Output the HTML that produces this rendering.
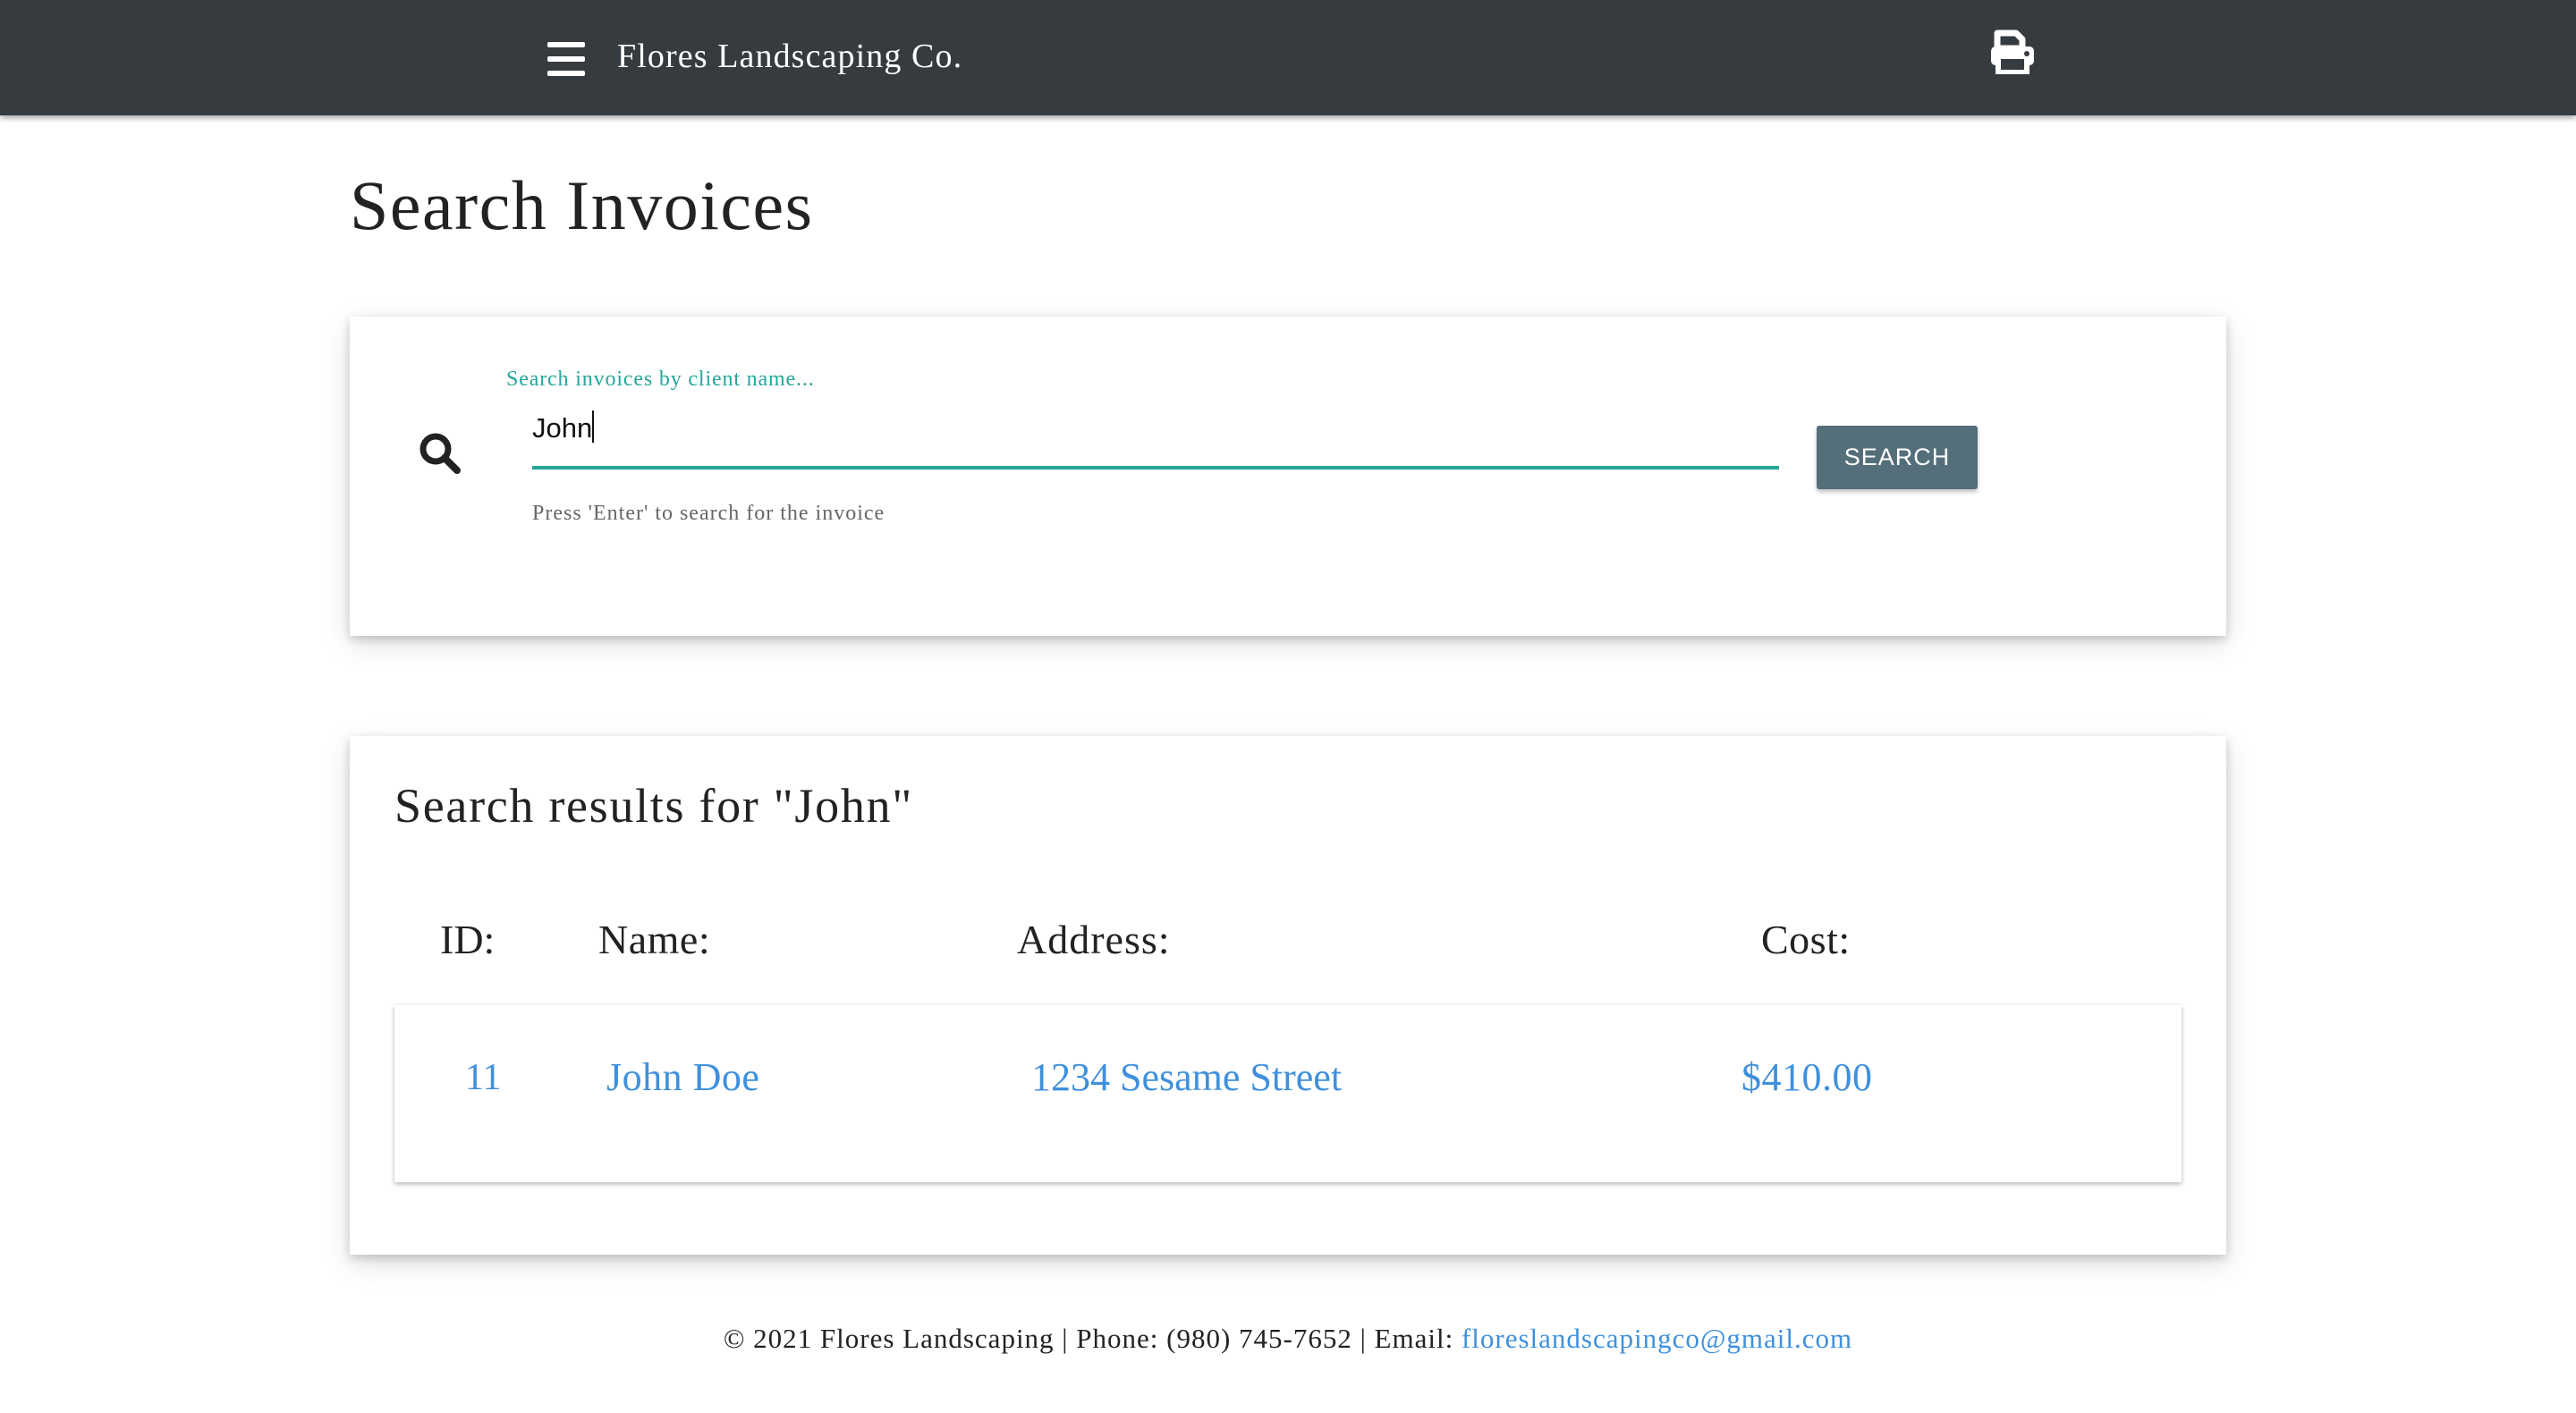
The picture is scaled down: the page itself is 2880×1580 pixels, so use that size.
<!DOCTYPE html>
<html><head><meta charset="utf-8"><style>
*{margin:0;padding:0;box-sizing:border-box}
body{width:2880px;height:1580px;background:#fff;font-family:"Liberation Serif",serif;color:#222;position:relative;overflow:hidden}
.hdr{position:absolute;left:0;top:0;width:2880px;height:129px;background:#363b40;box-shadow:0 3px 6px rgba(0,0,0,.35)}
.abs{position:absolute;white-space:nowrap}
.card{position:absolute;background:#fff;box-shadow:0 4px 10px rgba(0,0,0,.18),0 10px 30px rgba(0,0,0,.12)}
.blue{color:#3f90dc}
</style></head><body>
<div class="hdr">
 <svg class="abs" style="left:612px;top:47px" width="42" height="38" viewBox="0 0 42 38"><rect x="0" y="0" width="42" height="6" rx="2" fill="#fff"/><rect x="0" y="16" width="42" height="6" rx="2" fill="#fff"/><rect x="0" y="32" width="42" height="6" rx="2" fill="#fff"/></svg>
 <div class="abs" style="left:690px;top:41px;font-size:38px;letter-spacing:1.1px;color:#fff">Flores Landscaping Co.</div>
 <svg class="abs" style="left:2226px;top:33px" width="48" height="50" viewBox="0 0 48 50"><path d="M7 4h21l7 7v10H7z" fill="none" stroke="#fff" stroke-width="7" stroke-linejoin="round"/><rect x="0" y="19" width="48" height="21" rx="5" fill="#fff"/><rect x="8" y="30" width="32" height="18" fill="#363b40" stroke="#fff" stroke-width="6"/><circle cx="40" cy="27" r="3" fill="#363b40"/></svg>
</div>
<div class="abs" style="left:391px;top:185px;font-size:78px;letter-spacing:1.5px;color:#222">Search Invoices</div>
<div class="card" style="left:391px;top:354px;width:2098px;height:357px"></div>
<div class="abs" style="left:566px;top:411px;font-size:24px;letter-spacing:0.85px;color:#26a69a">Search invoices by client name...</div>
<svg class="abs" style="left:468px;top:483px" width="48" height="48" viewBox="0 0 48 48"><circle cx="19" cy="19" r="14" fill="none" stroke="#222" stroke-width="7"/><path d="M29 29l14 14" stroke="#222" stroke-width="8" stroke-linecap="round"/></svg>
<div class="abs" style="left:595px;top:459px;font-size:31px;font-family:'Liberation Sans',sans-serif;color:#111">John<span style="display:inline-block;width:2px;height:36px;background:#111;vertical-align:-6px"></span></div>
<div class="abs" style="left:595px;top:521px;width:1394px;height:4px;background:#26a69a"></div>
<div class="abs" style="left:595px;top:561px;font-size:24px;letter-spacing:1px;color:#666">Press 'Enter' to search for the invoice</div>
<div class="abs" style="left:2031px;top:476px;width:180px;height:71px;background:#546e7a;border-radius:3px;box-shadow:0 3px 5px rgba(0,0,0,.25);color:#fff;font-family:'Liberation Sans',sans-serif;font-size:27px;letter-spacing:1px;text-align:center;line-height:71px">SEARCH</div>
<div class="card" style="left:391px;top:823px;width:2098px;height:580px"></div>
<div class="abs" style="left:441px;top:870px;font-size:54px;letter-spacing:1.7px">Search results for "John"</div>
<div class="abs" style="left:492px;top:1024px;font-size:46px">ID:</div>
<div class="abs" style="left:669px;top:1024px;font-size:46px;letter-spacing:0.5px">Name:</div>
<div class="abs" style="left:1137px;top:1024px;font-size:46px;letter-spacing:1px">Address:</div>
<div class="abs" style="left:1969px;top:1024px;font-size:46px;letter-spacing:0.5px">Cost:</div>
<div class="card" style="left:441px;top:1124px;width:1998px;height:198px;box-shadow:0 2px 5px rgba(0,0,0,.3)"></div>
<div class="abs blue" style="left:520px;top:1181px;font-size:42px">11</div>
<div class="abs blue" style="left:678px;top:1179px;font-size:44px;letter-spacing:0.5px">John Doe</div>
<div class="abs blue" style="left:1153px;top:1179px;font-size:44px">1234 Sesame Street</div>
<div class="abs blue" style="left:1947px;top:1179px;font-size:44px;letter-spacing:0.5px">$410.00</div>
<div class="abs" style="left:0;width:2880px;text-align:center;top:1479px;font-size:31px;letter-spacing:1px">© 2021 Flores Landscaping | Phone: (980) 745-7652 | Email: <span class="blue">floreslandscapingco@gmail.com</span></div>
</body></html>
